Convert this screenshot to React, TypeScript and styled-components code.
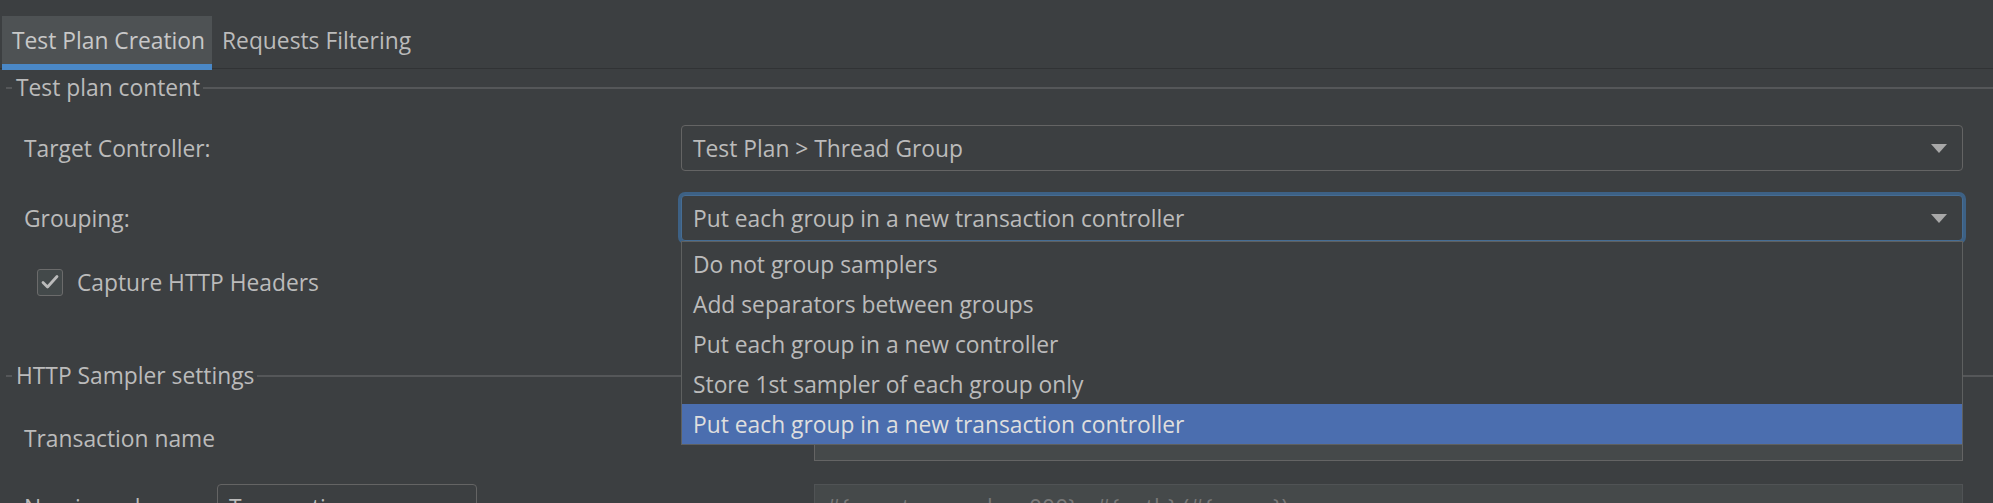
import React from "react";
import styled, { createGlobalStyle } from "styled-components";

const Global = createGlobalStyle`
  html, body { margin: 0; padding: 0; background: #3c3f41; }
  * { box-sizing: border-box; }
`;

const Page = styled.div`
  width: 1993px;
  height: 503px;
  overflow: hidden;
  background: #3c3f41;
  color: #bbbbbb;
  font-family: "Open Sans", "Noto Sans", sans-serif;
  font-size: 22.8px;
`;

const TabBar = styled.div`
  height: 69px;
  padding: 16px 0 0 2px;
  display: flex;
  border-bottom: 1px solid #313335;
`;

const Tab = styled.div<{ $active?: boolean }>`
  height: 54px;
  padding: 0 7px 6px 10px;
  display: flex;
  align-items: center;
  position: relative;
  z-index: 1;
  background: ${(p) => (p.$active ? "#4e5254" : "transparent")};
  box-shadow: ${(p) => (p.$active ? "inset 0 -6px 0 #4a88c7" : "none")};
  color: ${(p) => (p.$active ? "#c8c8c8" : "#bbbbbb")};
`;

const SectionHeader = styled.div<{ $top: number }>`
  margin-top: ${(p) => p.$top}px;
  height: 24px;
  display: flex;
  align-items: center;
  padding-left: 6px;
  &::before {
    content: "";
    width: 6px;
    height: 2px;
    background: #555759;
  }
  &::after {
    content: "";
    flex: 1;
    height: 2px;
    background: #555759;
  }
`;

const HeaderText = styled.span`
  padding: 0 3px 0 4px;
  line-height: 24px;
`;

const FormGrid = styled.div`
  margin-top: 25px;
  padding: 0 30px 0 24px;
  display: grid;
  grid-template-columns: 657px 1fr;
  row-gap: 24px;
  align-items: center;
`;

const Label = styled.div<{ $span?: string }>`
  grid-column: ${(p) => p.$span || "auto"};
  white-space: nowrap;
`;

const ComboWrap = styled.div`
  position: relative;
`;

const Combo = styled.div<{ $focused?: boolean }>`
  height: 46px;
  border: 1px solid ${(p) => (p.$focused ? "#466d94" : "#646464")};
  border-radius: 4px;
  background: #3c3f41;
  display: flex;
  align-items: center;
  padding: 0 15px 0 11px;
  box-shadow: ${(p) => (p.$focused ? "0 0 0 3px #3d6185" : "none")};
`;

const ComboText = styled.span`
  flex: 1;
  white-space: nowrap;
`;

const Arrow = styled.span`
  width: 0;
  height: 0;
  border-left: 8px solid transparent;
  border-right: 8px solid transparent;
  border-top: 9px solid #a8a8a8;
`;

const Popup = styled.div`
  position: absolute;
  top: 46px;
  left: 0;
  right: 0;
  z-index: 5;
  background: #3c3f41;
  border: 1px solid #5e6060;
  padding-top: 2px;
`;

const Item = styled.div<{ $selected?: boolean }>`
  height: 40px;
  display: flex;
  align-items: center;
  padding-left: 11px;
  white-space: nowrap;
  background: ${(p) => (p.$selected ? "#4b6eaf" : "transparent")};
  color: ${(p) => (p.$selected ? "#dedede" : "#bbbbbb")};
`;

const CheckRow = styled.div`
  margin-top: 27px;
  padding-left: 37px;
  height: 28px;
  display: flex;
  align-items: center;
  gap: 14px;
`;

const CheckBox = styled.span`
  width: 26px;
  height: 27px;
  border: 1px solid #6b6b6b;
  border-radius: 3px;
  background: #43494a;
  display: flex;
  align-items: center;
  justify-content: center;
`;

const SamplerGrid = styled.div`
  margin-top: 28px;
  padding: 0 30px 0 24px;
  display: grid;
  grid-template-columns: 193px 260px 337px 1fr;
  row-gap: 23px;
  align-items: center;
`;

const Field = styled.div<{ $muted?: boolean; $border: string; $h: number }>`
  height: ${(p) => p.$h}px;
  border: 1px solid ${(p) => p.$border};
  border-radius: ${(p) => (p.$muted ? "0" : "4px")};
  background: ${(p) => (p.$muted ? "#45494a" : "#3c3f41")};
  display: flex;
  align-items: center;
  padding: 0 11px;
  white-space: nowrap;
  overflow: hidden;
  color: ${(p) => (p.$muted ? "#787878" : "#bbbbbb")};
`;

const options = [
  "Do not group samplers",
  "Add separators between groups",
  "Put each group in a new controller",
  "Store 1st sampler of each group only",
  "Put each group in a new transaction controller",
];

export default function App() {
  return (
    <Page>
      <Global />
      <TabBar>
        <Tab $active>Test Plan Creation</Tab>
        <Tab>Requests Filtering</Tab>
      </TabBar>

      <SectionHeader $top={7}>
        <HeaderText>Test plan content</HeaderText>
      </SectionHeader>

      <FormGrid>
        <Label>Target Controller:</Label>
        <ComboWrap>
          <Combo>
            <ComboText>Test Plan &gt; Thread Group</ComboText>
            <Arrow />
          </Combo>
        </ComboWrap>
        <Label>Grouping:</Label>
        <ComboWrap>
          <Combo $focused>
            <ComboText>Put each group in a new transaction controller</ComboText>
            <Arrow />
          </Combo>
          <Popup>
            {options.map((o, i) => (
              <Item key={o} $selected={i === options.length - 1}>
                {o}
              </Item>
            ))}
          </Popup>
        </ComboWrap>
      </FormGrid>

      <CheckRow>
        <CheckBox>
          <svg width="18" height="16" viewBox="0 0 18 16">
            <path d="M2 8.5 L6.5 13 L16 2.5" fill="none" stroke="#bbbbbb" strokeWidth="2.8" strokeLinecap="round" strokeLinejoin="round" />
          </svg>
        </CheckBox>
        <span>Capture HTTP Headers</span>
      </CheckRow>

      <SectionHeader $top={68}>
        <HeaderText>HTTP Sampler settings</HeaderText>
      </SectionHeader>

      <SamplerGrid>
        <Label $span="1 / 4">Transaction name</Label>
        <Field $muted $border="#646464" $h={45} />
        <Label>Naming scheme</Label>
        <Field $border="#646464" $h={46}>Transaction</Field>
        <span />
        <Field $muted $border="#505355" $h={46}>#{"{"}counter,number,000{"}"} - #{"{"}path{"}"} (#{"{"}name{"}"})</Field>
      </SamplerGrid>
    </Page>
  );
}
